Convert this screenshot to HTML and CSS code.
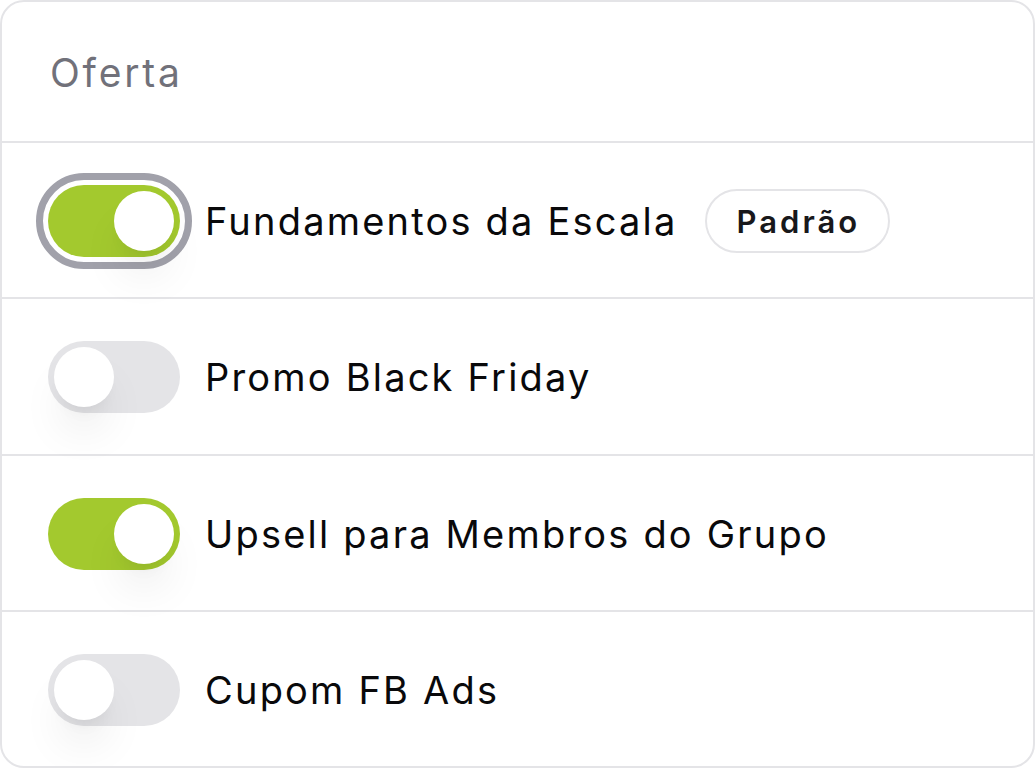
FILE: index.html
```html
<!DOCTYPE html>
<html lang="pt">
<head>
    <meta charset="UTF-8">
    <title>Oferta</title>
    <link rel="stylesheet" href="styles.css">
</head>
<body>
    <div class="card">
        <div class="card-head">Oferta</div>
        <div class="row">
            <span class="toggle on focus"><span class="knob"></span></span>
            <span class="label">Fundamentos da Escala</span>
            <span class="badge">Padrão</span>
        </div>
        <div class="row">
            <span class="toggle"><span class="knob"></span></span>
            <span class="label">Promo Black Friday</span>
        </div>
        <div class="row">
            <span class="toggle on"><span class="knob"></span></span>
            <span class="label">Upsell para Membros do Grupo</span>
        </div>
        <div class="row">
            <span class="toggle"><span class="knob"></span></span>
            <span class="label">Cupom FB Ads</span>
        </div>
    </div>
</body>
</html>
```

FILE: styles.css
```css
html, body {
    margin: 0;
    padding: 0;
    background: #fff;
}
body {
    font-family: Inter, "Noto Sans", sans-serif;
    width: 1035px;
    height: 768px;
}
.card {
    box-sizing: border-box;
    width: 1035px;
    height: 768px;
    border: 2px solid #e4e4e7;
    border-radius: 24px;
    overflow: hidden;
    display: flex;
    flex-direction: column;
}
.card-head {
    height: 141px;
    flex: none;
    box-sizing: border-box;
    padding: 2px 48px 0;
    display: flex;
    align-items: center;
    font-size: 39px;
    letter-spacing: 2.8px;
    color: #71717a;
    border-bottom: 2px solid #e4e4e7;
}
.row {
    flex: 1;
    display: flex;
    align-items: center;
    gap: 25px;
    padding: 2px 46px 0;
    border-bottom: 2px solid #e4e4e7;
}
.row:last-child {
    border-bottom: none;
}
.toggle {
    position: relative;
    box-sizing: border-box;
    width: 132px;
    height: 72px;
    flex: none;
    border-radius: 36px;
    background: #e4e4e7;
}
.toggle.on {
    background: #a3c92e;
}
.toggle.focus {
    outline: 7px solid #a1a1aa;
    outline-offset: 5px;
}
.knob {
    position: absolute;
    top: 6px;
    left: 6px;
    width: 60px;
    height: 60px;
    border-radius: 50%;
    background: #fff;
    box-shadow: 0 30px 45px -9px rgba(0, 0, 0, 0.1), 0 12px 18px -12px rgba(0, 0, 0, 0.1);
}
.toggle.on .knob {
    left: 66px;
}
.label {
    font-size: 38px;
    letter-spacing: 2.2px;
    color: #09090b;
}
.badge {
    box-sizing: border-box;
    height: 64px;
    margin-left: 2px;
    padding: 0 28px 0 30px;
    display: flex;
    align-items: center;
    border: 2px solid #e4e4e7;
    border-radius: 32px;
    font-size: 31px;
    font-weight: 600;
    letter-spacing: 3px;
    color: #18181b;
}
```
